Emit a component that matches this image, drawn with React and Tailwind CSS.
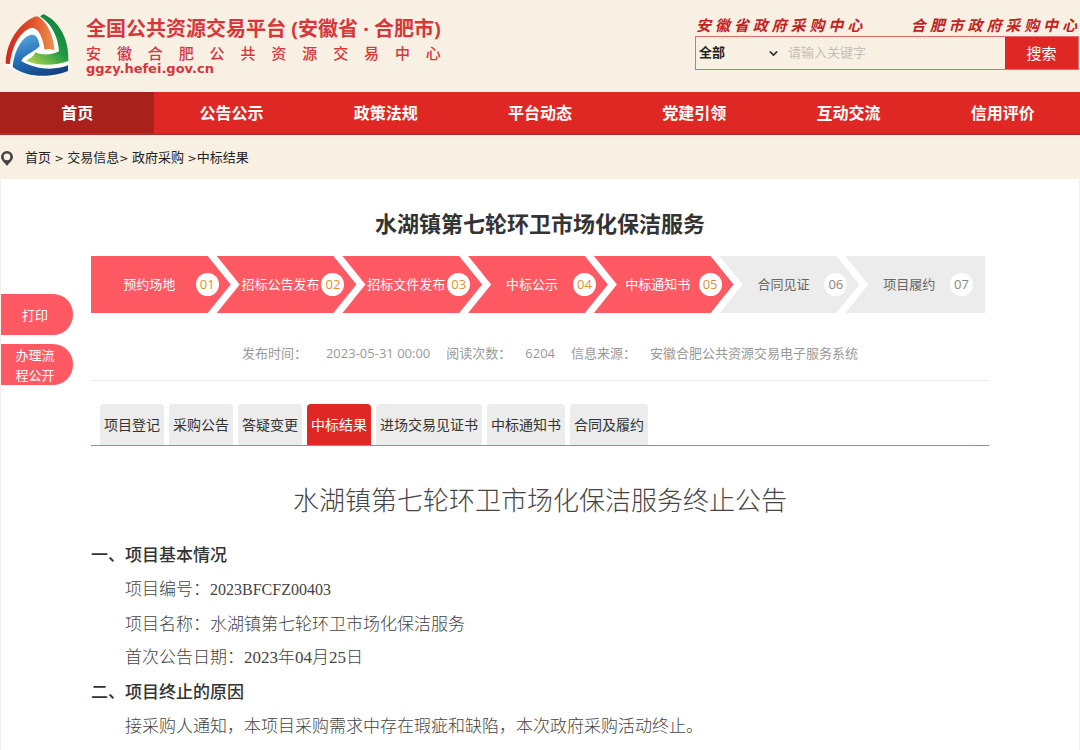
import { ChevronDown } from 'lucide-react';

const NAV = ['首页', '公告公示', '政策法规', '平台动态', '党建引领', '互动交流', '信用评价'];

const CRUMBS = [
  { label: '首页', sep: ' > ' },
  { label: '交易信息', sep: '> ' },
  { label: '政府采购', sep: ' >' },
  { label: '中标结果', sep: '' },
];

const STEPS = [
  { label: '预约场地', done: true },
  { label: '招标公告发布', done: true },
  { label: '招标文件发布', done: true },
  { label: '中标公示', done: true },
  { label: '中标通知书', done: true },
  { label: '合同见证', done: false },
  { label: '项目履约', done: false },
];

const TABS = ['项目登记', '采购公告', '答疑变更', '中标结果', '进场交易见证书', '中标通知书', '合同及履约'];

function Logo() {
  return (
    <svg viewBox="12 40 198 192" className="w-[66px] h-[64px] shrink-0" aria-hidden="true">
      <defs>
        <linearGradient id="red" x1="0" y1="0.6" x2="1" y2="0.6">
          <stop offset="0" stopColor="#d5261f" />
          <stop offset="0.5" stopColor="#dd4a2a" />
          <stop offset="1" stopColor="#f0924a" />
        </linearGradient>
        <linearGradient id="green" x1="0.9" y1="0" x2="0.2" y2="1">
          <stop offset="0" stopColor="#0d7c3c" />
          <stop offset="0.55" stopColor="#1f9a43" />
          <stop offset="1" stopColor="#a5cf4c" />
        </linearGradient>
        <linearGradient id="blue" x1="0.2" y1="0" x2="0.7" y2="1">
          <stop offset="0" stopColor="#5ba7dc" />
          <stop offset="0.5" stopColor="#1f6cb5" />
          <stop offset="1" stopColor="#153f82" />
        </linearGradient>
      </defs>
      {/* white underlay shows through as the seams between the three ribbons */}
      <path d="M116 46 C60 66 16 122 16 196 C90 244 160 236 205 214 C208 120 176 62 128 42 Z" fill="#fff" />
      <path
        d="M102 52 C62 70 18 122 17 192 L30 193 C34 150 54 98 94 84 C114 82 128 110 134 150 C146 146 156 148 163 153 C162 110 142 68 117 52 C112 49 107 50 102 52 Z"
        fill="url(#red)"
      />
      <path
        d="M130 43 C178 64 208 120 205 184 C172 196 122 202 78 183 C94 176 102 168 106 158 C128 168 158 166 177 155 C174 112 156 74 120 50 Z"
        fill="url(#green)"
      />
      <path
        d="M96 105 C68 108 43 150 38 202 C84 238 160 232 204 214 L204 197 C164 212 112 212 64 184 C72 166 98 160 119 140 C116 116 108 104 96 105 Z"
        fill="url(#blue)"
      />
    </svg>
  );
}

function PinIcon() {
  return (
    <svg viewBox="0 0 12 15" className="w-[12px] h-[15px]" aria-hidden="true">
      <path
        fillRule="evenodd"
        d="M6 0 A6 6 0 0 1 12 6 C12 9 9 11 6 15 C3 11 0 9 0 6 A6 6 0 0 1 6 0 Z M6 2.6 A3.3 3.3 0 1 0 6 9.2 A3.3 3.3 0 1 0 6 2.6 Z"
        fill="#444"
      />
    </svg>
  );
}

function Header() {
  return (
    <header className="flex justify-between h-[92px]">
      <div className="flex pl-1 pt-[13px]">
        <Logo />
        <div className="ml-4 text-[#d9363a] font-bold">
          <div className="text-[20px] leading-[32px] whitespace-nowrap">全国公共资源交易平台 (安徽省 · 合肥市)</div>
          <div className="text-[15px] leading-[16px] font-medium [text-align-last:justify]">
            安 徽 合 肥 公 共 资 源 交 易 中 心
          </div>
          <div className="font-['DejaVu_Sans'] text-[13px] leading-[16px]">ggzy.hefei.gov.cn</div>
        </div>
      </div>

      <div className="w-[385px] pt-[14px]">
        <div className="flex justify-between pl-px pr-[3px] text-[15px] leading-[22px] font-bold italic text-[#c4221f] whitespace-nowrap">
          <a href="#anhui">安 徽 省 政 府 采 购 中 心</a>
          <a href="#hefei">合 肥 市 政 府 采 购 中 心</a>
        </div>
        <form className="flex h-[34px] mr-px border border-[#e96a6a] text-[13px]">
          <div className="relative w-[84px]">
            <select aria-label="分类" className="appearance-none w-full h-full pl-[3px] font-bold text-[#222]">
              <option>全部</option>
            </select>
            <ChevronDown size={13} strokeWidth={3} className="absolute right-0 top-[10px] text-[#333] pointer-events-none" />
          </div>
          <input
            type="text"
            aria-label="关键字"
            placeholder="请输入关键字"
            className="flex-1 min-w-0 pl-2 outline-none placeholder:text-[#c4bfb8]"
          />
          <button type="button" className="w-[73px] bg-[#df2823] text-white text-[15px]">搜索</button>
        </form>
      </div>
    </header>
  );
}

function Steps() {
  return (
    <ol className="flex mt-[17px] pr-1 h-[57px] text-[13px]">
      {STEPS.map((s, i) => {
        let shape = '-ml-[14px] pl-[23px] pr-[12px] [clip-path:polygon(0_0,calc(100%_-_23px)_0,100%_50%,calc(100%_-_23px)_100%,0_100%,23px_50%)]';
        if (i === 0) {
          shape = 'pl-3 pr-[12px] [clip-path:polygon(0_0,calc(100%_-_23px)_0,100%_50%,calc(100%_-_23px)_100%,0_100%)]';
        } else if (i === STEPS.length - 1) {
          shape = '-ml-[14px] pl-[23px] pr-[12px] [clip-path:polygon(0_0,100%_0,100%_100%,0_100%,23px_50%)]';
        }
        return (
          <li
            key={s.label}
            className={`flex grow basis-[100px] items-center ${shape} ${s.done ? 'bg-[#ff5a64] text-white' : 'bg-[#ececec] text-[#666]'}`}
          >
            <span className="flex-1 text-center whitespace-nowrap">{s.label}</span>
            <span
              className={`w-[23px] h-[23px] shrink-0 rounded-full bg-white text-center leading-[23px] ${s.done ? 'text-[#e0912f]' : 'text-[#888]'}`}
            >
              0{i + 1}
            </span>
          </li>
        );
      })}
    </ol>
  );
}

function Article() {
  return (
    <article className="text-[#444]">
      <h2 className="mt-[34px] text-[26px] leading-10 font-light text-center">水湖镇第七轮环卫市场化保洁服务终止公告</h2>
      <div className="mt-[18px] text-[17px] leading-[34px] font-light">
        <h3 className="font-medium text-[#333]">一、项目基本情况</h3>
        <p className="pl-[34px]">
          项目编号：<span className="font-['Liberation_Serif'] text-[16px]">2023BFCFZ00403</span>
        </p>
        <p className="pl-[34px]">项目名称：水湖镇第七轮环卫市场化保洁服务</p>
        <p className="pl-[34px] font-['Liberation_Serif','Noto_Sans_CJK_SC',sans-serif]">首次公告日期：2023年04月25日</p>
        <h3 className="font-medium text-[#333]">二、项目终止的原因</h3>
        <p className="pl-[34px]">接采购人通知，本项目采购需求中存在瑕疵和缺陷，本次政府采购活动终止。</p>
      </div>
    </article>
  );
}

export default function App() {
  return (
    <div lang="zh-CN" className="min-h-screen flex flex-col bg-[#f8f0e3] font-['Open_Sans','Noto_Sans_CJK_SC',sans-serif]">
      <Header />

      <nav className="flex h-[43px] bg-[#df2823] border-b-2 border-[#b3302a] text-white text-[16px] font-bold">
        {NAV.map((n, i) => (
          <a
            key={n}
            href="#nav"
            className={`flex-1 text-center leading-[42px] ${i === 0 ? 'bg-[#a8211b]' : ''}`}
          >
            {n}
          </a>
        ))}
      </nav>

      <div className="flex items-center h-[44px] pl-px pt-[2px] text-[13px] text-[#222]">
        <PinIcon />
        <div className="ml-3 whitespace-pre">
          {CRUMBS.map((c) => (
            <span key={c.label}>
              <a href="#crumb">{c.label}</a>
              <span className="font-['DejaVu_Sans'] text-[11px]">{c.sep}</span>
            </span>
          ))}
        </div>
      </div>

      <main className="relative flex-1 bg-white border-x border-[#f6efe8] px-[90px] pt-7">
        {/* Floating actions */}
        <div className="absolute left-0 top-[115px] flex flex-col gap-[9px] w-[72px] text-[13px] leading-5 text-white">
          <button type="button" className="h-[41px] pr-1 rounded-r-[20px] bg-[#ff5a64]">打印</button>
          <button type="button" className="h-[41px] pl-3 pr-4 rounded-r-[20px] bg-[#ff5a64]">办理流<br />程公开</button>
        </div>

        <h1 className="text-[22px] leading-8 font-bold text-[#333] text-center">水湖镇第七轮环卫市场化保洁服务</h1>
        <Steps />

        <div className="flex justify-center gap-4 mt-6 pl-5 pb-[11px] border-b border-[#ececec] text-[13px] leading-8 text-[#999] whitespace-nowrap">
          <span className="flex gap-[19px]"><span>发布时间：</span><span>2023-05-31 00:00</span></span>
          <span className="flex gap-[14px]"><span>阅读次数：</span><span>6204</span></span>
          <span className="flex gap-[14px]"><span>信息来源：</span><span>安徽合肥公共资源交易电子服务系统</span></span>
        </div>

        <div role="tablist" className="flex gap-[5px] mt-[23px] pl-[9px] border-b border-b-[#e96a6a] text-[14px] text-[#333]">
          {TABS.map((t) => (
            <button
              key={t}
              type="button"
              role="tab"
              aria-selected={t === '中标结果'}
              className={`h-[41px] px-1 rounded-t-[4px] whitespace-nowrap ${t === '中标结果' ? 'bg-[#df2823] text-white' : 'bg-[#ececec]'}`}
            >
              {t}
            </button>
          ))}
        </div>

        <Article />
      </main>
    </div>
  );
}
